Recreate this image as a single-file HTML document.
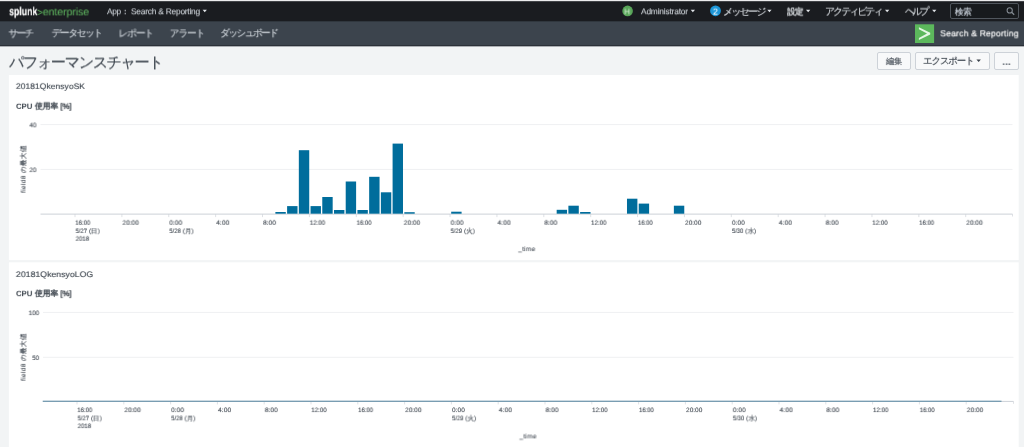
<!DOCTYPE html>
<html lang="ja">
<head>
<meta charset="utf-8">
<title>パフォーマンスチャート | Splunk</title>
<style>
html,body{margin:0;padding:0;}
body{width:1024px;height:447px;overflow:hidden;position:relative;background:#f2f4f5;font-family:"Liberation Sans",sans-serif;}
.abs{position:absolute;}
.t{position:absolute;white-space:nowrap;font-family:"Liberation Sans",sans-serif;will-change:transform;transform-origin:0 0;text-rendering:geometricPrecision;}
.t i,.ylab i{display:inline-block;font-style:normal;}
.cv{position:absolute;left:0;top:0;}
header,nav,main,section,h1,h2,h3{display:contents;margin:0;font-weight:400;}
.btn{box-sizing:border-box;border:1px solid #cdd2d8;border-radius:2px;background:#f8f9fa;top:52.2px;height:17.6px;}
.ylab{position:absolute;white-space:nowrap;font-size:6.3px;line-height:7px;color:#3f4750;-webkit-text-stroke:.1px #3f4750;transform:translate(-50%,-50%) rotate(-90deg);letter-spacing:.42px;will-change:transform;text-rendering:geometricPrecision;}
.ylab b{font-weight:400;font-size:6.6px;letter-spacing:0;}
.ylab i{width:7.02px;}
#search{box-sizing:border-box;left:949.6px;top:3.3px;width:69.2px;height:15.4px;border:1px solid #50565d;border-radius:2px;background:#171a1d;}
</style>
</head>
<body>
<svg class="cv" width="1024" height="447" viewBox="0 0 1024 447">
<rect x="0" y="0" width="1024" height="46.2" fill="#3c444d"/>
<rect x="0" y="0" width="1024" height="21.3" fill="#1a1c20"/>
<rect x="0" y="0" width="1024" height="1.2" fill="#ececed"/>
<rect x="0" y="45.0" width="1024" height="1.2" fill="#2b3138"/>
<rect x="8.9" y="75" width="1009.8" height="185.1" fill="#fff"/>
<rect x="8.9" y="262.3" width="1009.8" height="185" fill="#fff"/>
<rect x="40.5" y="124.1" width="972.0" height="1" fill="#eff0f2"/>
<rect x="40.5" y="168.9" width="972.0" height="1" fill="#eff0f2"/>
<rect x="40.5" y="213.6" width="972.0" height="1" fill="#ccd1d7"/>
<rect x="74.50" y="214.1" width="1" height="3" fill="#ccd1d7" opacity=".65"/>
<rect x="121.38" y="214.1" width="1" height="3" fill="#ccd1d7" opacity=".65"/>
<rect x="168.26" y="214.1" width="1" height="3" fill="#ccd1d7" opacity=".65"/>
<rect x="215.14" y="214.1" width="1" height="3" fill="#ccd1d7" opacity=".65"/>
<rect x="262.02" y="214.1" width="1" height="3" fill="#ccd1d7" opacity=".65"/>
<rect x="308.90" y="214.1" width="1" height="3" fill="#ccd1d7" opacity=".65"/>
<rect x="355.78" y="214.1" width="1" height="3" fill="#ccd1d7" opacity=".65"/>
<rect x="402.66" y="214.1" width="1" height="3" fill="#ccd1d7" opacity=".65"/>
<rect x="449.54" y="214.1" width="1" height="3" fill="#ccd1d7" opacity=".65"/>
<rect x="496.42" y="214.1" width="1" height="3" fill="#ccd1d7" opacity=".65"/>
<rect x="543.30" y="214.1" width="1" height="3" fill="#ccd1d7" opacity=".65"/>
<rect x="590.18" y="214.1" width="1" height="3" fill="#ccd1d7" opacity=".65"/>
<rect x="637.06" y="214.1" width="1" height="3" fill="#ccd1d7" opacity=".65"/>
<rect x="683.94" y="214.1" width="1" height="3" fill="#ccd1d7" opacity=".65"/>
<rect x="730.82" y="214.1" width="1" height="3" fill="#ccd1d7" opacity=".65"/>
<rect x="777.70" y="214.1" width="1" height="3" fill="#ccd1d7" opacity=".65"/>
<rect x="824.58" y="214.1" width="1" height="3" fill="#ccd1d7" opacity=".65"/>
<rect x="871.46" y="214.1" width="1" height="3" fill="#ccd1d7" opacity=".65"/>
<rect x="918.34" y="214.1" width="1" height="3" fill="#ccd1d7" opacity=".65"/>
<rect x="965.22" y="214.1" width="1" height="3" fill="#ccd1d7" opacity=".65"/>
<rect x="1012.0" y="214.1" width="1" height="2.4" fill="#ccd1d7" opacity=".65"/>
<rect x="275.39" y="212.00" width="10.4" height="1.70" fill="#006d9c"/>
<rect x="287.11" y="206.10" width="10.4" height="7.60" fill="#006d9c"/>
<rect x="298.83" y="150.20" width="10.4" height="63.50" fill="#006d9c"/>
<rect x="310.55" y="206.10" width="10.4" height="7.60" fill="#006d9c"/>
<rect x="322.27" y="197.00" width="10.4" height="16.70" fill="#006d9c"/>
<rect x="333.99" y="210.00" width="10.4" height="3.70" fill="#006d9c"/>
<rect x="345.71" y="181.50" width="10.4" height="32.20" fill="#006d9c"/>
<rect x="357.43" y="210.00" width="10.4" height="3.70" fill="#006d9c"/>
<rect x="369.15" y="176.80" width="10.4" height="36.90" fill="#006d9c"/>
<rect x="380.87" y="192.30" width="10.4" height="21.40" fill="#006d9c"/>
<rect x="392.59" y="143.60" width="10.4" height="70.10" fill="#006d9c"/>
<rect x="404.31" y="212.20" width="10.4" height="1.50" fill="#006d9c"/>
<rect x="451.19" y="211.70" width="10.4" height="2.00" fill="#006d9c"/>
<rect x="556.67" y="209.80" width="10.4" height="3.90" fill="#006d9c"/>
<rect x="568.39" y="205.70" width="10.4" height="8.00" fill="#006d9c"/>
<rect x="580.11" y="212.00" width="10.4" height="1.70" fill="#006d9c"/>
<rect x="626.99" y="198.70" width="10.4" height="15.00" fill="#006d9c"/>
<rect x="638.71" y="203.60" width="10.4" height="10.10" fill="#006d9c"/>
<rect x="673.87" y="205.70" width="10.4" height="8.00" fill="#006d9c"/>
<rect x="43.0" y="311.90" width="970.5" height="1" fill="#eff0f2"/>
<rect x="43.0" y="356.80" width="970.5" height="1" fill="#eff0f2"/>
<rect x="43.0" y="400.90" width="970.5" height="1" fill="#ccd1d7"/>
<rect x="76.50" y="401.40" width="1" height="3" fill="#ccd1d7" opacity=".65"/>
<rect x="123.30" y="401.40" width="1" height="3" fill="#ccd1d7" opacity=".65"/>
<rect x="170.10" y="401.40" width="1" height="3" fill="#ccd1d7" opacity=".65"/>
<rect x="216.90" y="401.40" width="1" height="3" fill="#ccd1d7" opacity=".65"/>
<rect x="263.70" y="401.40" width="1" height="3" fill="#ccd1d7" opacity=".65"/>
<rect x="310.50" y="401.40" width="1" height="3" fill="#ccd1d7" opacity=".65"/>
<rect x="357.30" y="401.40" width="1" height="3" fill="#ccd1d7" opacity=".65"/>
<rect x="404.10" y="401.40" width="1" height="3" fill="#ccd1d7" opacity=".65"/>
<rect x="450.90" y="401.40" width="1" height="3" fill="#ccd1d7" opacity=".65"/>
<rect x="497.70" y="401.40" width="1" height="3" fill="#ccd1d7" opacity=".65"/>
<rect x="544.50" y="401.40" width="1" height="3" fill="#ccd1d7" opacity=".65"/>
<rect x="591.30" y="401.40" width="1" height="3" fill="#ccd1d7" opacity=".65"/>
<rect x="638.10" y="401.40" width="1" height="3" fill="#ccd1d7" opacity=".65"/>
<rect x="684.90" y="401.40" width="1" height="3" fill="#ccd1d7" opacity=".65"/>
<rect x="731.70" y="401.40" width="1" height="3" fill="#ccd1d7" opacity=".65"/>
<rect x="778.50" y="401.40" width="1" height="3" fill="#ccd1d7" opacity=".65"/>
<rect x="825.30" y="401.40" width="1" height="3" fill="#ccd1d7" opacity=".65"/>
<rect x="872.10" y="401.40" width="1" height="3" fill="#ccd1d7" opacity=".65"/>
<rect x="918.90" y="401.40" width="1" height="3" fill="#ccd1d7" opacity=".65"/>
<rect x="965.70" y="401.40" width="1" height="3" fill="#ccd1d7" opacity=".65"/>
<rect x="1013.0" y="401.40" width="1" height="2.4" fill="#ccd1d7" opacity=".65"/>
<rect x="42.7" y="400.70" width="958.8" height="1.1" fill="#648fa9"/>
</svg>
<div class="abs" id="search"></div>
<div class="abs btn" style="left:877.3px;width:33.4px;"></div>
<div class="abs btn" style="left:915.2px;width:74.4px;"></div>
<div class="abs btn" style="left:994.2px;width:24.5px;"></div>
<svg class="cv" width="1024" height="80" viewBox="0 0 1024 80">
  <circle cx="627.6" cy="10.9" r="5.3" fill="#59a559"/>
  <circle cx="715.5" cy="10.8" r="5.4" fill="#1c96d8"/>
  <rect x="915" y="24.3" width="19.1" height="18.7" fill="#5cb85c"/>
  <polygon points="918.9,27.3 930.2,32.8 930.2,34.4 918.9,39.9 918.9,38.0 927.0,33.6 918.9,29.2" fill="#e4f7e4"/>
  <circle cx="1009.7" cy="10.4" r="2.6" fill="none" stroke="#858c94" stroke-width="1.05"/>
  <line x1="1011.6" y1="12.3" x2="1014.2" y2="14.7" stroke="#858c94" stroke-width="1.25"/>
  
  <polygon points="202.6,9.8 206.9,9.8 204.75,12.3" fill="#dfe2e6"/>
  <polygon points="690.7,9.8 695.0,9.8 692.85,12.3" fill="#dfe2e6"/>
  <polygon points="767.3,9.8 771.6,9.8 769.45,12.3" fill="#dfe2e6"/>
  <polygon points="806.0,9.8 810.3,9.8 808.15,12.3" fill="#dfe2e6"/>
  <polygon points="885.0,9.8 889.3,9.8 887.15,12.3" fill="#dfe2e6"/>
  <polygon points="932.1,9.8 936.4,9.8 934.25,12.3" fill="#dfe2e6"/>
  <polygon points="976.4,59.5 980.9,59.5 978.65,62.0" fill="#3c444d"/>
</svg>
<span class="ylab" style="left:24.2px;top:169.2px;">field8 <b><i>の</i><i>最</i><i>大</i><i>値</i></b></span>
<span class="ylab" style="left:24.4px;top:356.5px;">field8 <b><i>の</i><i>最</i><i>大</i><i>値</i></b></span>
<header id="splunk-bar">
<span class="t" style="left:9px;top:4px;font-size:11.8px;line-height:14px;color:#ffffff;font-weight:700;-webkit-text-stroke:0.15px #ffffff;transform:translate(0.13px,0.32px) rotate(.02deg) scaleX(0.7413);">splunk</span>
<span class="t" style="left:37px;top:6px;font-size:10.6px;line-height:12px;color:#5cb85c;transform:translate(0.26px,0.86px) rotate(.02deg) scaleX(0.8762);">&gt;</span>
<span class="t" style="left:42px;top:6px;font-size:10.6px;line-height:12px;color:#5fb95f;letter-spacing:-0.09px;transform:translate(0.70px,0.36px) rotate(.02deg);">enterprise</span>
<span class="t" style="left:107px;top:6px;font-size:8.4px;line-height:10px;color:#c9ced4;-webkit-text-stroke:0.1px #c9ced4;letter-spacing:-0.40px;transform:translate(0.00px,0.27px) rotate(.02deg);">App</span>
<span class="t" style="left:123px;top:6px;font-size:8.4px;line-height:10px;color:#c9ced4;font-weight:700;transform:translate(0.85px,0.28px) rotate(.02deg);">:</span>
<span class="t" style="left:131px;top:6px;font-size:8.4px;line-height:10px;color:#c9ced4;-webkit-text-stroke:0.1px #c9ced4;letter-spacing:-0.23px;transform:translate(0.00px,0.27px) rotate(.02deg);">Search &amp; Reporting</span>
<span class="t" style="left:641px;top:6px;font-size:8.4px;line-height:10px;color:#c9ced4;-webkit-text-stroke:0.1px #c9ced4;letter-spacing:-0.19px;transform:translate(0.00px,0.27px) rotate(.02deg);">Administrator</span>
<span class="t" style="left:624px;top:7px;font-size:8.1px;line-height:9px;color:#cfe9cf;transform:translate(0.25px,0.36px) rotate(.02deg);">H</span>
<span class="t" style="left:712px;top:6px;font-size:9.0px;line-height:10px;color:#ffffff;transform:translate(0.90px,0.70px) rotate(.02deg);">2</span>
<span class="t" style="left:723px;top:6px;font-size:10.0px;line-height:11px;color:#d3d7dc;-webkit-text-stroke:0.15px #d3d7dc;transform:translate(0.20px,0.92px) rotate(.02deg);"><i style="width:8.29px">メ</i><i style="width:8.29px">ッ</i><i style="width:8.29px">セ</i><i style="width:8.29px">ー</i><i style="width:8.29px">ジ</i></span>
<span class="t" style="left:787px;top:6px;font-size:8.6px;line-height:10px;color:#dde1e5;-webkit-text-stroke:0.3px #dde1e5;transform:translate(0.20px,0.53px) rotate(.02deg);"><i style="width:7.70px">設</i><i style="width:7.70px">定</i></span>
<span class="t" style="left:825px;top:6px;font-size:10.0px;line-height:11px;color:#d3d7dc;-webkit-text-stroke:0.15px #d3d7dc;transform:translate(0.00px,0.67px) rotate(.02deg);"><i style="width:8.07px">ア</i><i style="width:8.07px">ク</i><i style="width:8.07px">テ</i><i style="width:8.07px">ィ</i><i style="width:8.07px">ビ</i><i style="width:8.07px">テ</i><i style="width:8.07px">ィ</i></span>
<span class="t" style="left:904px;top:6px;font-size:10.0px;line-height:11px;color:#d3d7dc;-webkit-text-stroke:0.15px #d3d7dc;transform:translate(0.95px,0.67px) rotate(.02deg);"><i style="width:7.20px">ヘ</i><i style="width:7.20px">ル</i><i style="width:7.20px">プ</i></span>
<span class="t" style="left:954px;top:6px;font-size:8.6px;line-height:10px;color:#c3cbd4;-webkit-text-stroke:0.2px #c3cbd4;transform:translate(0.90px,0.68px) rotate(.02deg);"><i style="width:8.35px">検</i><i style="width:8.35px">索</i></span>
</header>
<nav id="app-bar">
<span class="t" style="left:8px;top:28px;font-size:9.6px;line-height:11px;color:#cdd3d9;-webkit-text-stroke:0.15px #cdd3d9;transform:translate(0.60px,0.41px) rotate(.02deg);"><i style="width:8.00px">サ</i><i style="width:8.00px">ー</i><i style="width:8.00px">チ</i></span>
<span class="t" style="left:51px;top:28px;font-size:9.6px;line-height:11px;color:#cdd3d9;-webkit-text-stroke:0.15px #cdd3d9;transform:translate(0.70px,0.16px) rotate(.02deg);"><i style="width:8.37px">デ</i><i style="width:8.37px">ー</i><i style="width:8.37px">タ</i><i style="width:8.37px">セ</i><i style="width:8.37px">ッ</i><i style="width:8.37px">ト</i></span>
<span class="t" style="left:118px;top:28px;font-size:9.6px;line-height:11px;color:#cdd3d9;-webkit-text-stroke:0.15px #cdd3d9;transform:translate(0.50px,0.41px) rotate(.02deg);"><i style="width:8.70px">レ</i><i style="width:8.70px">ポ</i><i style="width:8.70px">ー</i><i style="width:8.70px">ト</i></span>
<span class="t" style="left:169px;top:28px;font-size:9.6px;line-height:11px;color:#cdd3d9;-webkit-text-stroke:0.15px #cdd3d9;transform:translate(0.80px,0.41px) rotate(.02deg);"><i style="width:8.63px">ア</i><i style="width:8.63px">ラ</i><i style="width:8.63px">ー</i><i style="width:8.63px">ト</i></span>
<span class="t" style="left:220px;top:28px;font-size:9.6px;line-height:11px;color:#cdd3d9;-webkit-text-stroke:0.15px #cdd3d9;transform:translate(0.25px,0.16px) rotate(.02deg);"><i style="width:8.18px">ダ</i><i style="width:8.18px">ッ</i><i style="width:8.18px">シ</i><i style="width:8.18px">ュ</i><i style="width:8.18px">ボ</i><i style="width:8.18px">ー</i><i style="width:8.18px">ド</i></span>
<span class="t" style="left:940px;top:28px;font-size:8.6px;line-height:10px;color:#ffffff;-webkit-text-stroke:0.15px #ffffff;letter-spacing:0.19px;transform:translate(0.30px,0.33px) rotate(.02deg);">Search &amp; Reporting</span>
</nav>
<main id="dashboard">
<span class="t" style="left:9px;top:54px;font-size:15.2px;line-height:17px;color:#3c444d;-webkit-text-stroke:0.15px #3c444d;transform:translate(0.00px,0.41px) rotate(.02deg);"><i style="width:13.95px">パ</i><i style="width:13.95px">フ</i><i style="width:13.95px">ォ</i><i style="width:13.95px">ー</i><i style="width:13.95px">マ</i><i style="width:13.95px">ン</i><i style="width:13.95px">ス</i><i style="width:13.95px">チ</i><i style="width:13.95px">ャ</i><i style="width:13.95px">ー</i><i style="width:13.95px">ト</i></span>
<span class="t" style="left:885px;top:56px;font-size:8.4px;line-height:10px;color:#454d56;-webkit-text-stroke:0.1px #454d56;transform:translate(0.90px,0.07px) rotate(.02deg);"><i style="width:8.00px">編</i><i style="width:8.00px">集</i></span>
<span class="t" style="left:923px;top:54px;font-size:9.4px;line-height:11px;color:#3c444d;-webkit-text-stroke:0.15px #3c444d;transform:translate(0.05px,0.88px) rotate(.02deg);"><i style="width:8.45px">エ</i><i style="width:8.45px">ク</i><i style="width:8.45px">ス</i><i style="width:8.45px">ポ</i><i style="width:8.45px">ー</i><i style="width:8.45px">ト</i></span>
<span class="t" style="left:1002px;top:55px;font-size:10.6px;line-height:12px;color:#646c75;font-weight:700;letter-spacing:-0.02px;transform:translate(0.25px,0.98px) rotate(.02deg);">...</span>
</main>
<section class="dashboard-panel" id="panel1">
<span class="t" style="left:15px;top:81px;font-size:8.0px;line-height:9px;color:#3c444d;-webkit-text-stroke:0.12px #3c444d;transform:translate(0.97px,0.89px) rotate(.02deg) scaleX(1.0698);">20181QkensyoSK</span>
<span class="t" style="left:16px;top:101px;font-size:7.7px;line-height:9px;color:#3c444d;font-weight:700;transform:translate(0.05px,0.88px) rotate(.02deg) scaleX(1.0129);">CPU</span>
<span class="t" style="left:34px;top:101px;font-size:8.0px;line-height:9px;color:#3c444d;-webkit-text-stroke:0.3px #3c444d;transform:translate(0.80px,0.74px) rotate(.02deg);"><i style="width:7.73px">使</i><i style="width:7.73px">用</i><i style="width:7.73px">率</i></span>
<span class="t" style="left:60px;top:101px;font-size:7.7px;line-height:9px;color:#2f363e;-webkit-text-stroke:0.3px #2f363e;transform:translate(0.39px,0.83px) rotate(.02deg) scaleX(1.0100);">[%]</span>
<span class="t" style="left:29px;top:122px;font-size:6.3px;line-height:7px;color:#3f4750;-webkit-text-stroke:0.1px #3f4750;transform:translate(0.45px,0.31px) rotate(.02deg) scaleX(1.0000);">40</span>
<span class="t" style="left:29px;top:167px;font-size:6.3px;line-height:7px;color:#3f4750;-webkit-text-stroke:0.1px #3f4750;transform:translate(0.45px,0.11px) rotate(.02deg) scaleX(1.0000);">20</span>
<span class="t" style="left:75px;top:219px;font-size:6.3px;line-height:7px;color:#3f4750;-webkit-text-stroke:0.1px #3f4750;transform:translate(0.43px,0.81px) rotate(.02deg) scaleX(0.9400);">16:00</span>
<span class="t" style="left:75px;top:228px;font-size:6.3px;line-height:7px;color:#3f4750;-webkit-text-stroke:0.1px #3f4750;transform:translate(0.67px,0.01px) rotate(.02deg) scaleX(0.9277);">5/27</span>
<span class="t" style="left:89px;top:228px;font-size:6.3px;line-height:7px;color:#3f4750;-webkit-text-stroke:0.1px #3f4750;transform:translate(0.00px,0.01px) rotate(.02deg);">(</span>
<span class="t" style="left:90px;top:228px;font-size:6.6px;line-height:7px;color:#3f4750;-webkit-text-stroke:0.1px #3f4750;transform:translate(0.60px,0.26px) rotate(.02deg);"><i style="width:6.60px">日</i></span>
<span class="t" style="left:97px;top:228px;font-size:6.3px;line-height:7px;color:#3f4750;-webkit-text-stroke:0.1px #3f4750;transform:translate(0.65px,0.01px) rotate(.02deg);">)</span>
<span class="t" style="left:75px;top:235px;font-size:6.3px;line-height:7px;color:#3f4750;-webkit-text-stroke:0.1px #3f4750;transform:translate(0.66px,0.81px) rotate(.02deg) scaleX(0.9630);">2018</span>
<span class="t" style="left:122px;top:219px;font-size:6.3px;line-height:7px;color:#3f4750;-webkit-text-stroke:0.1px #3f4750;transform:translate(0.52px,0.81px) rotate(.02deg) scaleX(1.0361);">20:00</span>
<span class="t" style="left:169px;top:219px;font-size:6.3px;line-height:7px;color:#3f4750;-webkit-text-stroke:0.1px #3f4750;transform:translate(0.40px,0.81px) rotate(.02deg) scaleX(1.0383);">0:00</span>
<span class="t" style="left:169px;top:228px;font-size:6.3px;line-height:7px;color:#3f4750;-webkit-text-stroke:0.1px #3f4750;transform:translate(0.43px,0.01px) rotate(.02deg) scaleX(0.9277);">5/28</span>
<span class="t" style="left:182px;top:228px;font-size:6.3px;line-height:7px;color:#3f4750;-webkit-text-stroke:0.1px #3f4750;transform:translate(0.76px,0.01px) rotate(.02deg);">(</span>
<span class="t" style="left:184px;top:228px;font-size:6.6px;line-height:7px;color:#3f4750;-webkit-text-stroke:0.1px #3f4750;transform:translate(0.86px,0.26px) rotate(.02deg);"><i style="width:6.60px">月</i></span>
<span class="t" style="left:191px;top:228px;font-size:6.3px;line-height:7px;color:#3f4750;-webkit-text-stroke:0.1px #3f4750;transform:translate(0.41px,0.01px) rotate(.02deg);">)</span>
<span class="t" style="left:216px;top:219px;font-size:6.3px;line-height:7px;color:#3f4750;-webkit-text-stroke:0.1px #3f4750;transform:translate(0.27px,0.81px) rotate(.02deg) scaleX(1.0723);">4:00</span>
<span class="t" style="left:263px;top:219px;font-size:6.3px;line-height:7px;color:#3f4750;-webkit-text-stroke:0.1px #3f4750;transform:translate(0.16px,0.81px) rotate(.02deg) scaleX(1.0553);">8:00</span>
<span class="t" style="left:309px;top:219px;font-size:6.3px;line-height:7px;color:#3f4750;-webkit-text-stroke:0.1px #3f4750;transform:translate(0.81px,0.81px) rotate(.02deg) scaleX(0.9733);">12:00</span>
<span class="t" style="left:356px;top:219px;font-size:6.3px;line-height:7px;color:#3f4750;-webkit-text-stroke:0.1px #3f4750;transform:translate(0.71px,0.81px) rotate(.02deg) scaleX(0.9400);">16:00</span>
<span class="t" style="left:403px;top:219px;font-size:6.3px;line-height:7px;color:#3f4750;-webkit-text-stroke:0.1px #3f4750;transform:translate(0.80px,0.81px) rotate(.02deg) scaleX(1.0361);">20:00</span>
<span class="t" style="left:450px;top:219px;font-size:6.3px;line-height:7px;color:#3f4750;-webkit-text-stroke:0.1px #3f4750;transform:translate(0.68px,0.81px) rotate(.02deg) scaleX(1.0383);">0:00</span>
<span class="t" style="left:450px;top:228px;font-size:6.3px;line-height:7px;color:#3f4750;-webkit-text-stroke:0.1px #3f4750;transform:translate(0.71px,0.01px) rotate(.02deg) scaleX(0.9277);">5/29</span>
<span class="t" style="left:464px;top:228px;font-size:6.3px;line-height:7px;color:#3f4750;-webkit-text-stroke:0.1px #3f4750;transform:translate(0.04px,0.01px) rotate(.02deg);">(</span>
<span class="t" style="left:466px;top:228px;font-size:6.6px;line-height:7px;color:#3f4750;-webkit-text-stroke:0.1px #3f4750;transform:translate(0.14px,0.26px) rotate(.02deg);"><i style="width:6.60px">火</i></span>
<span class="t" style="left:472px;top:228px;font-size:6.3px;line-height:7px;color:#3f4750;-webkit-text-stroke:0.1px #3f4750;transform:translate(0.69px,0.01px) rotate(.02deg);">)</span>
<span class="t" style="left:497px;top:219px;font-size:6.3px;line-height:7px;color:#3f4750;-webkit-text-stroke:0.1px #3f4750;transform:translate(0.55px,0.81px) rotate(.02deg) scaleX(1.0723);">4:00</span>
<span class="t" style="left:544px;top:219px;font-size:6.3px;line-height:7px;color:#3f4750;-webkit-text-stroke:0.1px #3f4750;transform:translate(0.44px,0.81px) rotate(.02deg) scaleX(1.0553);">8:00</span>
<span class="t" style="left:591px;top:219px;font-size:6.3px;line-height:7px;color:#3f4750;-webkit-text-stroke:0.1px #3f4750;transform:translate(0.09px,0.81px) rotate(.02deg) scaleX(0.9733);">12:00</span>
<span class="t" style="left:637px;top:219px;font-size:6.3px;line-height:7px;color:#3f4750;-webkit-text-stroke:0.1px #3f4750;transform:translate(0.99px,0.81px) rotate(.02deg) scaleX(0.9400);">16:00</span>
<span class="t" style="left:685px;top:219px;font-size:6.3px;line-height:7px;color:#3f4750;-webkit-text-stroke:0.1px #3f4750;transform:translate(0.08px,0.81px) rotate(.02deg) scaleX(1.0361);">20:00</span>
<span class="t" style="left:731px;top:219px;font-size:6.3px;line-height:7px;color:#3f4750;-webkit-text-stroke:0.1px #3f4750;transform:translate(0.96px,0.81px) rotate(.02deg) scaleX(1.0383);">0:00</span>
<span class="t" style="left:731px;top:228px;font-size:6.3px;line-height:7px;color:#3f4750;-webkit-text-stroke:0.1px #3f4750;transform:translate(0.99px,0.01px) rotate(.02deg) scaleX(0.9277);">5/30</span>
<span class="t" style="left:745px;top:228px;font-size:6.3px;line-height:7px;color:#3f4750;-webkit-text-stroke:0.1px #3f4750;transform:translate(0.32px,0.01px) rotate(.02deg);">(</span>
<span class="t" style="left:747px;top:228px;font-size:6.6px;line-height:7px;color:#3f4750;-webkit-text-stroke:0.1px #3f4750;transform:translate(0.67px,0.26px) rotate(.02deg);"><i style="width:6.60px">水</i></span>
<span class="t" style="left:753px;top:228px;font-size:6.3px;line-height:7px;color:#3f4750;-webkit-text-stroke:0.1px #3f4750;transform:translate(0.97px,0.01px) rotate(.02deg);">)</span>
<span class="t" style="left:778px;top:219px;font-size:6.3px;line-height:7px;color:#3f4750;-webkit-text-stroke:0.1px #3f4750;transform:translate(0.83px,0.81px) rotate(.02deg) scaleX(1.0723);">4:00</span>
<span class="t" style="left:825px;top:219px;font-size:6.3px;line-height:7px;color:#3f4750;-webkit-text-stroke:0.1px #3f4750;transform:translate(0.72px,0.81px) rotate(.02deg) scaleX(1.0553);">8:00</span>
<span class="t" style="left:872px;top:219px;font-size:6.3px;line-height:7px;color:#3f4750;-webkit-text-stroke:0.1px #3f4750;transform:translate(0.37px,0.81px) rotate(.02deg) scaleX(0.9733);">12:00</span>
<span class="t" style="left:919px;top:219px;font-size:6.3px;line-height:7px;color:#3f4750;-webkit-text-stroke:0.1px #3f4750;transform:translate(0.27px,0.81px) rotate(.02deg) scaleX(0.9400);">16:00</span>
<span class="t" style="left:966px;top:219px;font-size:6.3px;line-height:7px;color:#3f4750;-webkit-text-stroke:0.1px #3f4750;transform:translate(0.36px,0.81px) rotate(.02deg) scaleX(1.0361);">20:00</span>
<span class="t" style="left:518px;top:246px;font-size:6.3px;line-height:7px;color:#3f4750;-webkit-text-stroke:0.1px #3f4750;letter-spacing:0.38px;transform:translate(0.30px,0.11px) rotate(.02deg);">_time</span>
</section>
<section class="dashboard-panel" id="panel2">
<span class="t" style="left:15px;top:269px;font-size:8.0px;line-height:9px;color:#3c444d;-webkit-text-stroke:0.12px #3c444d;transform:translate(0.95px,0.99px) rotate(.02deg) scaleX(1.0906);">20181QkensyoLOG</span>
<span class="t" style="left:16px;top:289px;font-size:7.7px;line-height:9px;color:#3c444d;font-weight:700;transform:translate(0.05px,0.18px) rotate(.02deg) scaleX(1.0129);">CPU</span>
<span class="t" style="left:34px;top:289px;font-size:8.0px;line-height:9px;color:#3c444d;-webkit-text-stroke:0.3px #3c444d;transform:translate(0.80px,0.04px) rotate(.02deg);"><i style="width:7.73px">使</i><i style="width:7.73px">用</i><i style="width:7.73px">率</i></span>
<span class="t" style="left:60px;top:289px;font-size:7.7px;line-height:9px;color:#2f363e;-webkit-text-stroke:0.3px #2f363e;transform:translate(0.39px,0.13px) rotate(.02deg) scaleX(1.0100);">[%]</span>
<span class="t" style="left:28px;top:310px;font-size:6.3px;line-height:7px;color:#3f4750;-webkit-text-stroke:0.1px #3f4750;transform:translate(0.70px,0.11px) rotate(.02deg) scaleX(0.9949);">100</span>
<span class="t" style="left:32px;top:355px;font-size:6.3px;line-height:7px;color:#3f4750;-webkit-text-stroke:0.1px #3f4750;transform:translate(0.36px,0.01px) rotate(.02deg) scaleX(0.9692);">50</span>
<span class="t" style="left:77px;top:407px;font-size:6.3px;line-height:7px;color:#3f4750;-webkit-text-stroke:0.1px #3f4750;transform:translate(0.43px,0.11px) rotate(.02deg) scaleX(0.9400);">16:00</span>
<span class="t" style="left:77px;top:415px;font-size:6.3px;line-height:7px;color:#3f4750;-webkit-text-stroke:0.1px #3f4750;transform:translate(0.67px,0.31px) rotate(.02deg) scaleX(0.9277);">5/27</span>
<span class="t" style="left:91px;top:415px;font-size:6.3px;line-height:7px;color:#3f4750;-webkit-text-stroke:0.1px #3f4750;transform:translate(0.00px,0.31px) rotate(.02deg);">(</span>
<span class="t" style="left:92px;top:415px;font-size:6.6px;line-height:7px;color:#3f4750;-webkit-text-stroke:0.1px #3f4750;transform:translate(0.60px,0.56px) rotate(.02deg);"><i style="width:6.60px">日</i></span>
<span class="t" style="left:99px;top:415px;font-size:6.3px;line-height:7px;color:#3f4750;-webkit-text-stroke:0.1px #3f4750;transform:translate(0.65px,0.31px) rotate(.02deg);">)</span>
<span class="t" style="left:77px;top:423px;font-size:6.3px;line-height:7px;color:#3f4750;-webkit-text-stroke:0.1px #3f4750;transform:translate(0.66px,0.11px) rotate(.02deg) scaleX(0.9630);">2018</span>
<span class="t" style="left:124px;top:407px;font-size:6.3px;line-height:7px;color:#3f4750;-webkit-text-stroke:0.1px #3f4750;transform:translate(0.44px,0.11px) rotate(.02deg) scaleX(1.0361);">20:00</span>
<span class="t" style="left:171px;top:407px;font-size:6.3px;line-height:7px;color:#3f4750;-webkit-text-stroke:0.1px #3f4750;transform:translate(0.24px,0.11px) rotate(.02deg) scaleX(1.0383);">0:00</span>
<span class="t" style="left:171px;top:415px;font-size:6.3px;line-height:7px;color:#3f4750;-webkit-text-stroke:0.1px #3f4750;transform:translate(0.27px,0.31px) rotate(.02deg) scaleX(0.9277);">5/28</span>
<span class="t" style="left:184px;top:415px;font-size:6.3px;line-height:7px;color:#3f4750;-webkit-text-stroke:0.1px #3f4750;transform:translate(0.60px,0.31px) rotate(.02deg);">(</span>
<span class="t" style="left:186px;top:415px;font-size:6.6px;line-height:7px;color:#3f4750;-webkit-text-stroke:0.1px #3f4750;transform:translate(0.70px,0.56px) rotate(.02deg);"><i style="width:6.60px">月</i></span>
<span class="t" style="left:193px;top:415px;font-size:6.3px;line-height:7px;color:#3f4750;-webkit-text-stroke:0.1px #3f4750;transform:translate(0.25px,0.31px) rotate(.02deg);">)</span>
<span class="t" style="left:218px;top:407px;font-size:6.3px;line-height:7px;color:#3f4750;-webkit-text-stroke:0.1px #3f4750;transform:translate(0.03px,0.11px) rotate(.02deg) scaleX(1.0723);">4:00</span>
<span class="t" style="left:264px;top:407px;font-size:6.3px;line-height:7px;color:#3f4750;-webkit-text-stroke:0.1px #3f4750;transform:translate(0.84px,0.11px) rotate(.02deg) scaleX(1.0553);">8:00</span>
<span class="t" style="left:311px;top:407px;font-size:6.3px;line-height:7px;color:#3f4750;-webkit-text-stroke:0.1px #3f4750;transform:translate(0.41px,0.11px) rotate(.02deg) scaleX(0.9733);">12:00</span>
<span class="t" style="left:358px;top:407px;font-size:6.3px;line-height:7px;color:#3f4750;-webkit-text-stroke:0.1px #3f4750;transform:translate(0.23px,0.11px) rotate(.02deg) scaleX(0.9400);">16:00</span>
<span class="t" style="left:405px;top:407px;font-size:6.3px;line-height:7px;color:#3f4750;-webkit-text-stroke:0.1px #3f4750;transform:translate(0.24px,0.11px) rotate(.02deg) scaleX(1.0361);">20:00</span>
<span class="t" style="left:452px;top:407px;font-size:6.3px;line-height:7px;color:#3f4750;-webkit-text-stroke:0.1px #3f4750;transform:translate(0.04px,0.11px) rotate(.02deg) scaleX(1.0383);">0:00</span>
<span class="t" style="left:452px;top:415px;font-size:6.3px;line-height:7px;color:#3f4750;-webkit-text-stroke:0.1px #3f4750;transform:translate(0.07px,0.31px) rotate(.02deg) scaleX(0.9277);">5/29</span>
<span class="t" style="left:465px;top:415px;font-size:6.3px;line-height:7px;color:#3f4750;-webkit-text-stroke:0.1px #3f4750;transform:translate(0.40px,0.31px) rotate(.02deg);">(</span>
<span class="t" style="left:467px;top:415px;font-size:6.6px;line-height:7px;color:#3f4750;-webkit-text-stroke:0.1px #3f4750;transform:translate(0.50px,0.56px) rotate(.02deg);"><i style="width:6.60px">火</i></span>
<span class="t" style="left:474px;top:415px;font-size:6.3px;line-height:7px;color:#3f4750;-webkit-text-stroke:0.1px #3f4750;transform:translate(0.05px,0.31px) rotate(.02deg);">)</span>
<span class="t" style="left:498px;top:407px;font-size:6.3px;line-height:7px;color:#3f4750;-webkit-text-stroke:0.1px #3f4750;transform:translate(0.83px,0.11px) rotate(.02deg) scaleX(1.0723);">4:00</span>
<span class="t" style="left:545px;top:407px;font-size:6.3px;line-height:7px;color:#3f4750;-webkit-text-stroke:0.1px #3f4750;transform:translate(0.64px,0.11px) rotate(.02deg) scaleX(1.0553);">8:00</span>
<span class="t" style="left:592px;top:407px;font-size:6.3px;line-height:7px;color:#3f4750;-webkit-text-stroke:0.1px #3f4750;transform:translate(0.21px,0.11px) rotate(.02deg) scaleX(0.9733);">12:00</span>
<span class="t" style="left:639px;top:407px;font-size:6.3px;line-height:7px;color:#3f4750;-webkit-text-stroke:0.1px #3f4750;transform:translate(0.03px,0.11px) rotate(.02deg) scaleX(0.9400);">16:00</span>
<span class="t" style="left:686px;top:407px;font-size:6.3px;line-height:7px;color:#3f4750;-webkit-text-stroke:0.1px #3f4750;transform:translate(0.04px,0.11px) rotate(.02deg) scaleX(1.0361);">20:00</span>
<span class="t" style="left:732px;top:407px;font-size:6.3px;line-height:7px;color:#3f4750;-webkit-text-stroke:0.1px #3f4750;transform:translate(0.84px,0.11px) rotate(.02deg) scaleX(1.0383);">0:00</span>
<span class="t" style="left:732px;top:415px;font-size:6.3px;line-height:7px;color:#3f4750;-webkit-text-stroke:0.1px #3f4750;transform:translate(0.87px,0.31px) rotate(.02deg) scaleX(0.9277);">5/30</span>
<span class="t" style="left:746px;top:415px;font-size:6.3px;line-height:7px;color:#3f4750;-webkit-text-stroke:0.1px #3f4750;transform:translate(0.20px,0.31px) rotate(.02deg);">(</span>
<span class="t" style="left:748px;top:415px;font-size:6.6px;line-height:7px;color:#3f4750;-webkit-text-stroke:0.1px #3f4750;transform:translate(0.55px,0.56px) rotate(.02deg);"><i style="width:6.60px">水</i></span>
<span class="t" style="left:754px;top:415px;font-size:6.3px;line-height:7px;color:#3f4750;-webkit-text-stroke:0.1px #3f4750;transform:translate(0.85px,0.31px) rotate(.02deg);">)</span>
<span class="t" style="left:779px;top:407px;font-size:6.3px;line-height:7px;color:#3f4750;-webkit-text-stroke:0.1px #3f4750;transform:translate(0.63px,0.11px) rotate(.02deg) scaleX(1.0723);">4:00</span>
<span class="t" style="left:826px;top:407px;font-size:6.3px;line-height:7px;color:#3f4750;-webkit-text-stroke:0.1px #3f4750;transform:translate(0.44px,0.11px) rotate(.02deg) scaleX(1.0553);">8:00</span>
<span class="t" style="left:873px;top:407px;font-size:6.3px;line-height:7px;color:#3f4750;-webkit-text-stroke:0.1px #3f4750;transform:translate(0.01px,0.11px) rotate(.02deg) scaleX(0.9733);">12:00</span>
<span class="t" style="left:919px;top:407px;font-size:6.3px;line-height:7px;color:#3f4750;-webkit-text-stroke:0.1px #3f4750;transform:translate(0.83px,0.11px) rotate(.02deg) scaleX(0.9400);">16:00</span>
<span class="t" style="left:966px;top:407px;font-size:6.3px;line-height:7px;color:#3f4750;-webkit-text-stroke:0.1px #3f4750;transform:translate(0.84px,0.11px) rotate(.02deg) scaleX(1.0361);">20:00</span>
<span class="t" style="left:519px;top:433px;font-size:6.3px;line-height:7px;color:#3f4750;-webkit-text-stroke:0.1px #3f4750;letter-spacing:0.38px;transform:translate(0.50px,0.41px) rotate(.02deg);">_time</span>
</section>
</body>
</html>
